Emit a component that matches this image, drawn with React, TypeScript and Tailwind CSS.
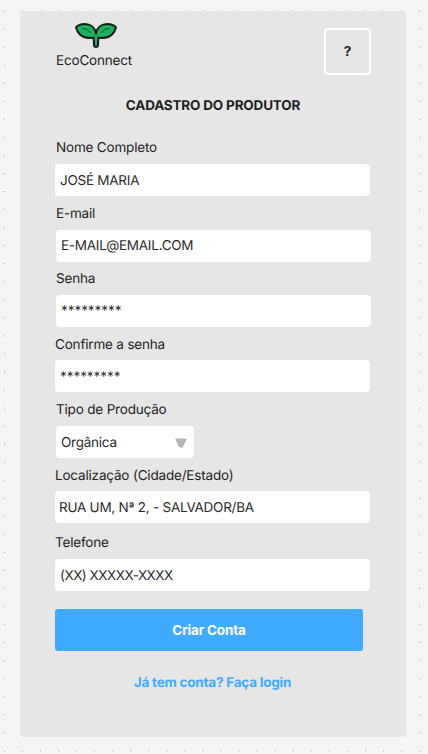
import type { ReactNode } from "react";

function Sprout() {
  return (
    <svg width="44" height="28" viewBox="0 0 44 28" className="block">
      <g stroke="#171c19" strokeWidth="2.1" strokeLinejoin="round" strokeLinecap="round" fill="#1cb35c">
        <path d="M19.6 13.5 L20.1 23.7 Q20.3 25 22 25 Q23.7 25 23.9 23.7 L24.4 13.5 Z" />
        <path d="M22 11.2 C20.8 5.7 16.6 2 10.8 2 C7.4 2 4.1 3 2 5.4 C3.2 11 7.8 15.5 14 15.9 L22 15.9 Z" />
        <path d="M22 11.2 C23.2 5.7 27.4 2 33.2 2 C36.6 2 39.9 3 42 5.4 C40.8 11 36.2 15.5 30 15.9 L22 15.9 Z" />
      </g>
      <path d="M20.7 12.5 H23.3 V18 H20.7 Z" fill="#1cb35c" />
      <g stroke="#0d7a3d" strokeWidth="1.5" strokeLinecap="round" fill="none">
        <path d="M8.3 6.2 C11.6 6.4 14.4 7.8 16.3 10.4" />
        <path d="M35.7 6.2 C32.4 6.4 29.6 7.8 27.7 10.4" />
      </g>
    </svg>
  );
}

type FieldProps = {
  label: string;
  value: string;
  row: string;
  labelClass: string;
  boxClass?: string;
  valueClass?: string;
  children?: ReactNode;
};

function Field({ label, value, row, labelClass, boxClass = "w-[315px] pl-[5px]", valueClass = "pt-px tracking-[-0.25px]", children }: FieldProps) {
  return (
    <div className={row}>
      <div className={`flex items-center ${labelClass}`}>{label}</div>
      <div className={`flex h-8 items-center justify-between rounded-[4px] bg-white text-[#2b2b2b] ${boxClass}`}>
        <span className={valueClass}>{value}</span>
        {children}
      </div>
    </div>
  );
}

export default function App() {
  return (
    <div className="h-[754px] w-[428px] overflow-hidden bg-[#f5f5f5] bg-[radial-gradient(circle_at_center,#a8a8a8_0.5px,transparent_1px)] bg-[length:18.06px_18.06px] bg-[position:-4.6px_2px] pt-[11px] pl-5 font-['Inter','Liberation_Sans',sans-serif] text-[13.5px] leading-[18px] font-[420] tracking-[-0.18px] text-[#1e1e1e] [text-rendering:geometricPrecision]">
      <main className="h-[726px] w-[386px] rounded-[3px] bg-[#e6e6e6] pl-[35px]">
        <header className="flex h-[70px] w-[316px] justify-between">
          <div className="w-[80px] pt-[11px] pl-px">
            <div className="pl-[18px]"><Sprout /></div>
            <div className="mt-[2px] whitespace-nowrap">EcoConnect</div>
          </div>
          <button className="mt-[17px] flex h-[47px] w-[47px] items-center justify-center rounded-[4px] border-2 border-white pb-[2px] font-bold">?</button>
        </header>
        <h1 className="mt-[16px] w-[316px] text-center font-bold tracking-[-0.18px]">CADASTRO DO PRODUTOR</h1>
        <form className="mt-[16px]">
          <Field label="Nome Completo" value="JOSÉ MARIA" row="" labelClass="h-[33px] pl-px pt-px" />
          <Field label="E-mail" value="E-MAIL@EMAIL.COM" row="pl-px" labelClass="h-[34px] pt-[2px]" valueClass="tracking-[-0.25px]" />
          <Field label="Senha" value="*********" row="pl-px" labelClass="h-[33px] pt-px" valueClass="tracking-[-0.05px]" />
          <Field label="Confirme a senha" value="*********" row="" labelClass="h-[33px] pt-[3px]" valueClass="pt-px tracking-[-0.05px]" />
          <Field label="Tipo de Produção" value="Orgânica" row="pl-px" labelClass="h-[34px] pt-[2px]" boxClass="w-[138px] pl-[5px] pr-[7px]">
            <svg width="12" height="10" viewBox="0 0 12 10" className="mt-px">
              <path d="M1.4 1.4 H10.6 L6.9 8.6 H5.1 Z" fill="#b3b3b3" stroke="#b3b3b3" strokeWidth="1.9" strokeLinejoin="round" />
            </svg>
          </Field>
          <Field label="Localização (Cidade/Estado)" value="RUA UM, Nª 2, - SALVADOR/BA" row="" labelClass="h-[33px] pt-[3px]" boxClass="w-[315px] pl-1" />
          <Field label="Telefone" value="(XX) XXXXX-XXXX" row="" labelClass="h-[36px] pt-[4px]" valueClass="pt-px tracking-[-0.5px]" />
          <button type="button" className="mt-[18px] flex h-[42px] w-[308px] items-center justify-center rounded-[3px] bg-[#3eabff] font-bold text-white">Criar Conta</button>
        </form>
        <a className="mt-[23px] block w-[315px] text-center font-bold tracking-[-0.22px] text-[#3eabff]">Já tem conta? Faça login</a>
      </main>
    </div>
  );
}
